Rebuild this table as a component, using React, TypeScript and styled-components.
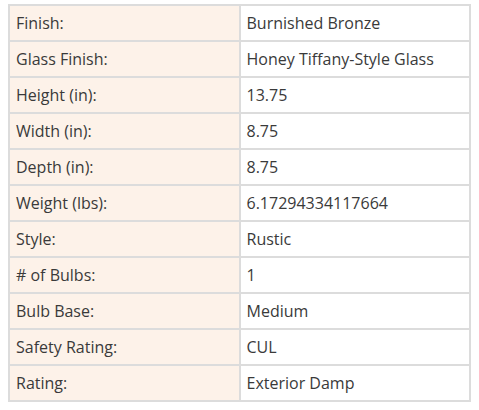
import React from "react";
import styled, { createGlobalStyle } from "styled-components";

const Global = createGlobalStyle`
  html, body { margin: 0; padding: 0; background: #ffffff; }
  body { font-family: "Open Sans", "Noto Sans", sans-serif; }
`;

const Wrap = styled.div`
  padding: 4px 0 0 8px;
`;

const Table = styled.table`
  border-collapse: collapse;
  width: 463px;
  table-layout: fixed;
  font-size: 16px;
  color: #3a3a3a;
`;

const Row = styled.tr`
  height: 36px;
`;

const Cell = styled.td<{ $label?: boolean }>`
  border: 2px solid #dcdcdc;
  padding: 0 6px;
  vertical-align: middle;
  background: ${(p) => (p.$label ? "#fdf2e9" : "#ffffff")};
  white-space: nowrap;
  line-height: 20px;
`;

const rows: [string, string][] = [
  ["Finish:", "Burnished Bronze"],
  ["Glass Finish:", "Honey Tiffany-Style Glass"],
  ["Height (in):", "13.75"],
  ["Width (in):", "8.75"],
  ["Depth (in):", "8.75"],
  ["Weight (lbs):", "6.17294334117664"],
  ["Style:", "Rustic"],
  ["# of Bulbs:", "1"],
  ["Bulb Base:", "Medium"],
  ["Safety Rating:", "CUL"],
  ["Rating:", "Exterior Damp"],
];

export default function App() {
  return (
    <>
      <Global />
      <Wrap>
        <Table>
          <tbody>
            {rows.map(([k, v]) => (
              <Row key={k}>
                <Cell $label>{k}</Cell>
                <Cell>{v}</Cell>
              </Row>
            ))}
          </tbody>
        </Table>
      </Wrap>
    </>
  );
}
